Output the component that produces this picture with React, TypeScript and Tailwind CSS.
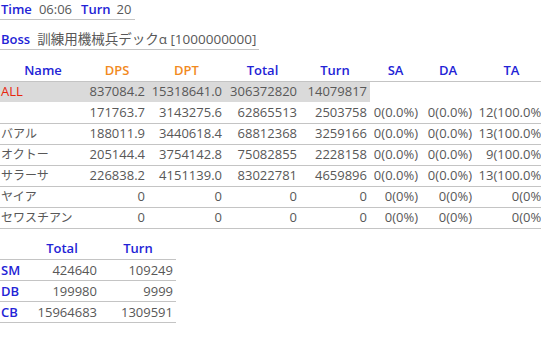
import React from "react";

const BLUE = "text-[#2323d6]";

const rows: string[][] = [
  ["", "171763.7", "3143275.6", "62865513", "2503758", "0(0.0%)", "0(0.0%)", "12(100.0%)"],
  ["バアル", "188011.9", "3440618.4", "68812368", "3259166", "0(0.0%)", "0(0.0%)", "13(100.0%)"],
  ["オクトー", "205144.4", "3754142.8", "75082855", "2228158", "0(0.0%)", "0(0.0%)", "9(100.0%)"],
  ["サラーサ", "226838.2", "4151139.0", "83022781", "4659896", "0(0.0%)", "0(0.0%)", "13(100.0%)"],
  ["ヤイア", "0", "0", "0", "0", "0(0%)", "0(0%)", "0(0%)"],
  ["セワスチアン", "0", "0", "0", "0", "0(0%)", "0(0%)", "0(0%)"],
];

const widths = [86, 62, 77, 75, 70, 51, 54, 73];

export default function App() {
  return (
    <div
      className="w-[541px] h-[344px] overflow-hidden bg-white text-[13px] leading-none text-[#585858]"
      style={{ fontFamily: '"Open Sans", "Noto Sans CJK JP", sans-serif' }}
    >
      <div className="inline-flex items-center h-[20px] border-b border-[#c4c4c4] pl-[1px] pr-[4px]">
        <span className={`font-semibold ${BLUE}`}>Time</span>
        <span className="ml-[7px]">06:06</span>
        <span className={`ml-[9px] font-semibold ${BLUE}`}>Turn</span>
        <span className="ml-[6px]">20</span>
      </div>
      <div />
      <div className="inline-flex items-center h-[20px] mt-[10px] border-b border-[#c4c4c4] pl-[1px] pr-[3px]">
        <span className={`font-semibold ${BLUE}`}>Boss</span>
        <span className="ml-[7px] text-[13.5px]">訓練用機械兵デックα [1000000000]</span>
      </div>
      <table className="table-fixed border-collapse mt-[10px] w-[548px]">
        <colgroup>
          {widths.map((w, i) => (
            <col key={i} style={{ width: w }} />
          ))}
        </colgroup>
        <thead>
          <tr className="h-[21px] border-b border-[#c4c4c4]">
            <th className={`font-semibold text-center ${BLUE}`}>Name</th>
            <th className="font-semibold text-center text-[#f28a1e]">DPS</th>
            <th className="font-semibold text-center text-[#f28a1e]">DPT</th>
            <th className={`font-semibold text-center ${BLUE}`}>Total</th>
            <th className={`font-semibold text-center ${BLUE}`}>Turn</th>
            <th className={`font-semibold text-center ${BLUE}`}>SA</th>
            <th className={`font-semibold text-center ${BLUE}`}>DA</th>
            <th className={`font-semibold text-center ${BLUE}`}>TA</th>
          </tr>
        </thead>
        <tbody>
          <tr className="h-[21px]">
            <td className="bg-[#dadada] text-left pl-[1px] text-[#e8260c]">ALL</td>
            <td className="bg-[#dadada] text-right pr-[3px]">837084.2</td>
            <td className="bg-[#dadada] text-right pr-[3px]">15318641.0</td>
            <td className="bg-[#dadada] text-right pr-[3px]">306372820</td>
            <td className="bg-[#dadada] text-right pr-[3px]">14079817</td>
            <td />
            <td />
            <td />
          </tr>
          {rows.map((r, i) => (
            <tr key={i} className="h-[21px] border-b border-[#c4c4c4]">
              {r.map((c, j) => (
                <td
                  key={j}
                  className={
                    j === 0
                      ? "text-left pl-[1px] whitespace-nowrap overflow-hidden text-[12px]"
                      : "text-right pr-[3px] whitespace-nowrap"
                  }
                >
                  {c}
                </td>
              ))}
            </tr>
          ))}
        </tbody>
      </table>
      <table className="table-fixed border-collapse mt-[10px] w-[176px]">
        <colgroup>
          <col style={{ width: 24 }} />
          <col style={{ width: 76 }} />
          <col style={{ width: 76 }} />
        </colgroup>
        <thead>
          <tr className="h-[21px] border-b border-[#c4c4c4]">
            <th />
            <th className={`font-semibold text-center ${BLUE}`}>Total</th>
            <th className={`font-semibold text-center ${BLUE}`}>Turn</th>
          </tr>
        </thead>
        <tbody>
          {[
            ["SM", "424640", "109249"],
            ["DB", "199980", "9999"],
            ["CB", "15964683", "1309591"],
          ].map((r, i) => (
            <tr key={i} className="h-[21px] border-b border-[#c4c4c4]">
              <td className={`text-left pl-[1px] font-semibold ${BLUE}`}>{r[0]}</td>
              <td className="text-right pr-[3px]">{r[1]}</td>
              <td className="text-right pr-[3px]">{r[2]}</td>
            </tr>
          ))}
        </tbody>
      </table>
    </div>
  );
}
